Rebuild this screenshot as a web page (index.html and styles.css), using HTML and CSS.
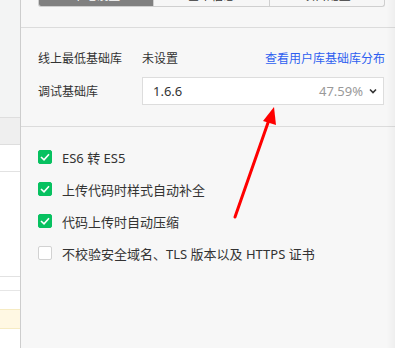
FILE: index.html
```html
<!DOCTYPE html>
<html lang="zh-CN">
<head>
<meta charset="utf-8">
<link rel="stylesheet" href="styles.css">
</head>
<body>
<div class="app">
  <aside class="side">
    <div class="s-top"></div>
    <div class="s-head"></div>
    <div class="s-row s-r1"></div>
    <div class="s-row s-r2"></div>
    <div class="s-row s-r3"></div>
    <div class="s-row s-r4"></div>
    <div class="s-row s-warn"></div>
    <div class="s-row s-rest"></div>
  </aside>
  <main class="panel">
    <div class="tabbar">
      <div class="tabs">
        <div class="tab active"><span>本地设置</span></div>
        <div class="tab"><span>基本信息</span></div>
        <div class="tab"><span>项目配置</span></div>
      </div>
    </div>
    <section class="libs">
      <div class="row">
        <span class="label">线上最低基础库</span>
        <span class="value">未设置</span>
        <a class="link">查看用户库基础库分布</a>
      </div>
      <div class="row">
        <span class="label">调试基础库</span>
        <div class="select">
          <span class="ver">1.6.6</span>
          <span class="pct">47.59%</span>
          <svg class="chev" width="8" height="6" viewBox="0 0 8 6"><path d="M1 1.5 L4 4.5 L7 1.5" fill="none" stroke="#333" stroke-width="1.6"/></svg>
        </div>
      </div>
    </section>
    <section class="opts">
      <label class="opt"><span class="cb on"><svg width="10" height="8" viewBox="0 0 10 8"><path d="M1 4 L4 6.8 L9 1.2" fill="none" stroke="#fff" stroke-width="1.6"/></svg></span>ES6 转 ES5</label>
      <label class="opt"><span class="cb on"><svg width="10" height="8" viewBox="0 0 10 8"><path d="M1 4 L4 6.8 L9 1.2" fill="none" stroke="#fff" stroke-width="1.6"/></svg></span>上传代码时样式自动补全</label>
      <label class="opt"><span class="cb on"><svg width="10" height="8" viewBox="0 0 10 8"><path d="M1 4 L4 6.8 L9 1.2" fill="none" stroke="#fff" stroke-width="1.6"/></svg></span>代码上传时自动压缩</label>
      <label class="opt"><span class="cb"></span>不校验安全域名、TLS 版本以及 HTTPS 证书</label>
    </section>
    <div class="edge"></div>
  </main>
</div>
<svg class="arrow" width="395" height="348" viewBox="0 0 395 348">
  <line x1="235" y1="217" x2="270" y2="117" stroke="#ff0000" stroke-width="3" stroke-linecap="round"/>
  <polygon points="274,107 263,121 276,125" fill="#ff0000"/>
</svg>
</body>
</html>
```

FILE: styles.css
```css
html, body {
  margin: 0;
  padding: 0;
  width: 395px;
  height: 348px;
  overflow: hidden;
  font-family: "Noto Sans", "Noto Sans CJK SC", sans-serif;
  color: #333;
}
.app {
  display: flex;
  height: 348px;
}
.side {
  width: 20px;
  flex: none;
  border-right: 1px solid #cdcdcd;
  display: flex;
  flex-direction: column;
  background: #fff;
}
.s-top { height: 117px; background: #f3f4f4; border-bottom: 1px solid #dedede; }
.s-head { height: 26px; background: #efefef; border-bottom: 1px solid #dedede; }
.s-r1 { height: 26px; border-bottom: 1px solid #e2e2e2; }
.s-r2 { height: 104px; border-bottom: 1px solid #e2e2e2; }
.s-r3 { height: 13px; border-bottom: 1px solid #e6e6e6; }
.s-r4 { height: 18px; }
.s-warn { height: 18px; background: #fff8e3; border-top: 1px solid #f6ebc2; border-bottom: 1px solid #f6ebc2; }
.s-rest { flex: 1; }
.panel {
  flex: 1;
  position: relative;
  background: #f7f7f7;
  display: flex;
  flex-direction: column;
}
.tabbar {
  height: 27px;
  border-bottom: 1px solid #dcdcdc;
  padding: 0 10px 0 17px;
}
.tabs {
  display: flex;
  height: 6px;
  border: 1px solid #cfcfcf;
  border-top: none;
  border-radius: 0 0 3px 3px;
  overflow: hidden;
  background: #f6f6f6;
}
.tab {
  flex: 1;
  height: 6px;
  overflow: hidden;
  font-size: 12px;
  text-align: center;
  color: #333;
  border-left: 1px solid #cfcfcf;
}
.tab span {
  display: block;
  line-height: 16px;
  margin-top: -12px;
}
.tab.active {
  background: #808080;
  color: #fff;
  border-left: none;
}
.libs {
  padding: 16px 10px 21px 17px;
  border-bottom: 1px solid #dcdcdc;
  display: flex;
  flex-direction: column;
  gap: 5px;
}
.row {
  display: flex;
  align-items: center;
  height: 28px;
  font-size: 12px;
}
.label { width: 104px; flex: none; }
.value { flex: 1; }
.link { color: #2e5ff0; }
.select {
  flex: 1;
  height: 26px;
  margin-right: 1px;
  background: #fff;
  border: 1px solid #dddddd;
  display: flex;
  align-items: center;
  padding: 0 6px 0 10px;
  font-size: 13px;
}
.ver { flex: 1; color: #333; }
.pct { color: #999; margin-right: 6px; }
.chev { display: block; }
.opts {
  padding: 14px 10px 0 17px;
  display: flex;
  flex-direction: column;
}
.opt {
  height: 32px;
  display: flex;
  align-items: center;
  font-size: 13px;
  color: #333;
}
.cb {
  width: 14px;
  height: 14px;
  box-sizing: border-box;
  border-radius: 2px;
  margin-right: 10px;
  background: #fff;
  border: 1px solid #d2d2d2;
  display: flex;
  align-items: center;
  justify-content: center;
  flex: none;
}
.cb.on { background: #07c160; border-color: #07c160; }
.edge {
  position: absolute;
  right: 0;
  top: 0;
  bottom: 0;
  width: 9px;
  background: linear-gradient(to right, rgba(0,0,0,0), rgba(0,0,0,0.035));
  pointer-events: none;
}
.arrow {
  position: absolute;
  left: 0;
  top: 0;
  pointer-events: none;
}
```
